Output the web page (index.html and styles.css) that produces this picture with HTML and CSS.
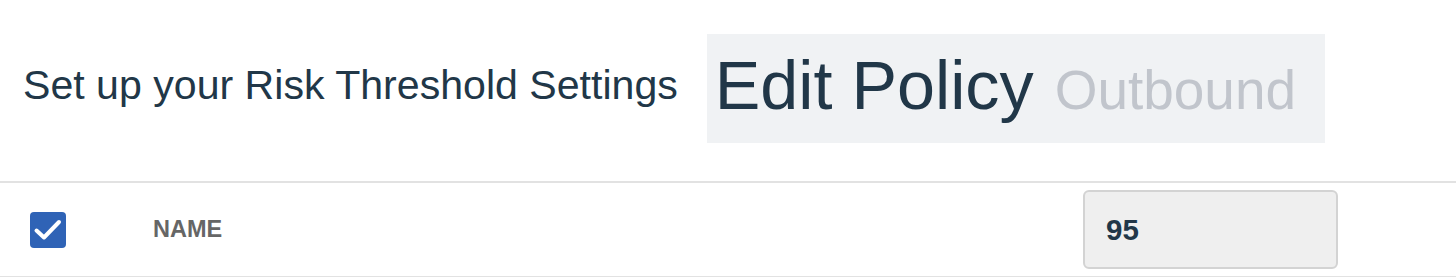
FILE: index.html
```html
<!DOCTYPE html>
<html lang="en">
<head>
<meta charset="utf-8">
<title>Edit Policy</title>
<link rel="stylesheet" href="styles.css">
</head>
<body>
<header class="page-head">
  <h2 class="intro">Set up your Risk Threshold Settings</h2>
  <div class="title-box">
    <h1 class="title">Edit Policy <small class="subtitle">Outbound</small></h1>
  </div>
</header>
<div class="table">
  <div class="row">
    <div class="cell cell-check">
      <span class="checkbox" role="checkbox" aria-checked="true">
        <svg viewBox="0 0 36 36" width="36" height="36" aria-hidden="true">
          <path d="M6.5 18.5 L14 25.5 L29 10" fill="none" stroke="#fff" stroke-width="4" stroke-linecap="round" stroke-linejoin="round"/>
        </svg>
      </span>
    </div>
    <div class="cell cell-name">Name</div>
    <div class="cell cell-input">
      <input class="value-input" type="text" value="95" readonly>
    </div>
    <div class="cell"></div>
  </div>
</div>
</body>
</html>
```
FILE: styles.css
```css
html, body {
  margin: 0;
  padding: 0;
  background: #ffffff;
  font-family: "Liberation Sans", Arial, Helvetica, sans-serif;
  color: #213748;
}

.page-head {
  height: 181px;
  display: flex;
  align-items: flex-start;
  padding-left: 23px;
  box-sizing: border-box;
}

.intro {
  margin: 61px 0 0 0;
  font-size: 41.1px;
  font-weight: 400;
  line-height: 48px;
  color: #213748;
  white-space: nowrap;
}

.title-box {
  margin: 34px 0 0 29px;
  width: 618px;
  height: 109px;
  box-sizing: border-box;
  background: #f0f2f4;
  padding: 12px 0 0 8px;
}

.title {
  margin: 0;
  font-size: 68.3px;
  font-weight: 400;
  line-height: 78px;
  color: #213748;
  white-space: nowrap;
}

.subtitle {
  margin-left: 2px;
  font-size: 80.5%;
  color: #c1c5cc;
}

.table {
  border-top: 2px solid #e2e2e2;
  border-bottom: 1px solid #e2e2e2;
}

.row {
  display: grid;
  grid-template-columns: 123px 930px 255px 1fr;
  align-items: center;
  height: 93px;
  padding-left: 30px;
}

.checkbox {
  display: block;
  width: 36px;
  height: 36px;
  border-radius: 4px;
  background: #2f63b6;
}

.checkbox svg {
  display: block;
}

.cell-name {
  font-size: 23.5px;
  font-weight: 700;
  color: #666666;
  text-transform: uppercase;
}

.value-input {
  display: block;
  box-sizing: border-box;
  width: 255px;
  height: 79px;
  margin: 0;
  padding: 0 0 0 21px;
  border: 2px solid #d3d3d3;
  border-radius: 6px;
  background: #efefef;
  font-family: "Liberation Sans", Arial, Helvetica, sans-serif;
  font-size: 29.5px;
  font-weight: 700;
  color: #213748;
  outline: none;
}
```
